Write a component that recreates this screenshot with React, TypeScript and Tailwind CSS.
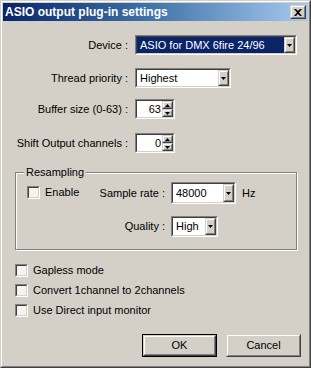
import React from "react";

const FONT = { fontFamily: '"Liberation Sans", Arial, sans-serif' };

function Raised({ className = "", children }: { className?: string; children?: React.ReactNode }) {
  return (
    <div className={`shrink-0 border border-t-[#d4d0c8] border-l-[#d4d0c8] border-b-[#404040] border-r-[#404040] ${className}`}>
      <div className="w-full h-full border border-t-white border-l-white border-b-[#808080] border-r-[#808080] bg-[#d4d0c8] flex items-center justify-center">
        {children}
      </div>
    </div>
  );
}

function Sunken({ className = "", children, bg = "bg-white" }: { className?: string; children?: React.ReactNode; bg?: string }) {
  return (
    <div className={`shrink-0 border border-t-[#808080] border-l-[#808080] border-b-white border-r-white ${className}`}>
      <div className={`w-full h-full border border-t-[#404040] border-l-[#404040] border-b-[#d4d0c8] border-r-[#d4d0c8] ${bg} flex`}>
        {children}
      </div>
    </div>
  );
}

function Down() {
  return (
    <svg width="5" height="3" viewBox="0 0 5 3">
      <polygon points="0,0 5,0 2.5,3" fill="#000" />
    </svg>
  );
}
function Up() {
  return (
    <svg width="5" height="3" viewBox="0 0 5 3">
      <polygon points="0,3 5,3 2.5,0" fill="#000" />
    </svg>
  );
}

function Combo({ w, value, selected = false, h = "h-[20px]" }: { w: string; value: string; selected?: boolean; h?: string }) {
  return (
    <Sunken className={`${w} ${h}`}>
      <div className={`flex-1 flex items-center pl-[2px] whitespace-nowrap overflow-hidden ${selected ? "bg-[#0a246a] text-white" : "text-black"} text-[11px] leading-none`}>
        <span className="pl-[1px]">{value}</span>
      </div>
      <Raised className="w-[11px] h-full">
        <Down />
      </Raised>
    </Sunken>
  );
}

function Spin({ value }: { value: string }) {
  return (
    <Sunken className="w-[40px] h-[20px]">
      <div className="flex-1 flex items-center justify-end text-[11px] leading-none pr-[1px]">{value}</div>
      <div className="w-[11px] h-full flex flex-col">
        <Raised className="w-full h-1/2"><Up /></Raised>
        <Raised className="w-full h-1/2"><Down /></Raised>
      </div>
    </Sunken>
  );
}

function Check() {
  return <Sunken className="w-[13px] h-[13px]" bg="bg-[#f4f3f0]" />;
}

function Row({ label, children, mt }: { label: string; children: React.ReactNode; mt: string }) {
  return (
    <div className={`flex items-center ${mt}`}>
      <div className="w-[126px] shrink-0 text-right text-[11px] leading-none pr-[1px] whitespace-nowrap">{label}</div>
      <div className="ml-[6px]">{children}</div>
    </div>
  );
}

export default function App() {
  return (
    <div style={FONT} className="w-[311px] h-[368px] bg-[#d4d0c8] text-black select-none whitespace-nowrap">
      <div className="w-full h-full border border-t-[#d4d0c8] border-l-[#d4d0c8] border-b-[#404040] border-r-[#404040]">
        <div className="w-full h-full border border-t-white border-l-white border-b-[#808080] border-r-[#808080] p-[1px] flex flex-col">
          {/* title bar */}
          <div className="h-[18px] flex items-center bg-[linear-gradient(to_right,#0a246a,#3a6ea5_45%,#a6caf0)] pl-[2px] pr-[2px]">
            <span className="text-white font-bold text-[12px] leading-none flex-1">ASIO output plug-in settings</span>
            <Raised className="w-[16px] h-[14px]">
              <svg width="8" height="7" viewBox="0 0 8 7">
                <path d="M0 0 L2 0 L4 2 L6 0 L8 0 L5 3.5 L8 7 L6 7 L4 5 L2 7 L0 7 L3 3.5 Z" fill="#000" />
              </svg>
            </Raised>
          </div>

          {/* body */}
          <div className="flex-1 flex flex-col text-[11px]">
            <Row label="Device :" mt="mt-[14px]">
              <Combo w="w-[162px]" value="ASIO for DMX 6fire 24/96" selected />
            </Row>
            <Row label="Thread priority :" mt="mt-[13px]">
              <Combo w="w-[96px]" value="Highest" />
            </Row>
            <Row label="Buffer size (0-63) :" mt="mt-[11px]">
              <Spin value="63" />
            </Row>
            <Row label="Shift Output channels :" mt="mt-[14px]">
              <Spin value="0" />
            </Row>

            {/* group */}
            <div className="relative mt-[19px] ml-[12px] w-[282px] h-[78px] border border-[#808080] shadow-[inset_1px_1px_0_#fff,1px_1px_0_#fff]">
              <div className="absolute -top-[7px] left-[8px] px-[2px] bg-[#d4d0c8] text-[11px] leading-[13px]">Resampling</div>
              <div className="flex flex-col pt-[9px]">
                <div className="flex items-center">
                  <div className="w-[149px] shrink-0 flex items-center justify-between">
                    <div className="ml-[11px] flex items-center gap-[5px] mt-[-2px]">
                      <Check />
                      <span className="leading-none">Enable</span>
                    </div>
                    <span className="leading-none">Sample rate :</span>
                  </div>
                  <div className="ml-[6px]"><Combo w="w-[65px]" h="h-[22px]" value="48000" /></div>
                  <div className="ml-[6px] leading-none">Hz</div>
                </div>
                <div className="flex items-center mt-[12px]">
                  <div className="w-[149px] shrink-0 text-right leading-none">Quality :</div>
                  <div className="ml-[6px]"><Combo w="w-[47px]" h="h-[21px]" value="High" /></div>
                </div>
              </div>
            </div>

            {/* checkboxes */}
            <div className="flex flex-col ml-[12px] mt-[14px] gap-[7px]">
              {["Gapless mode", "Convert 1channel to 2channels", "Use Direct input monitor"].map((t) => (
                <div key={t} className="flex items-center gap-[5px] h-[13px]">
                  <Check />
                  <span className="leading-none">{t}</span>
                </div>
              ))}
            </div>

            {/* buttons */}
            <div className="flex justify-end gap-[9px] mt-[17px] pr-[7px]">
              <div className="border border-black">
                <Raised className="w-[73px] h-[21px]"><span className="leading-none text-[11px]">OK</span></Raised>
              </div>
              <Raised className="w-[75px] h-[23px]"><span className="leading-none text-[11px]">Cancel</span></Raised>
            </div>
          </div>
        </div>
      </div>
    </div>
  );
}
